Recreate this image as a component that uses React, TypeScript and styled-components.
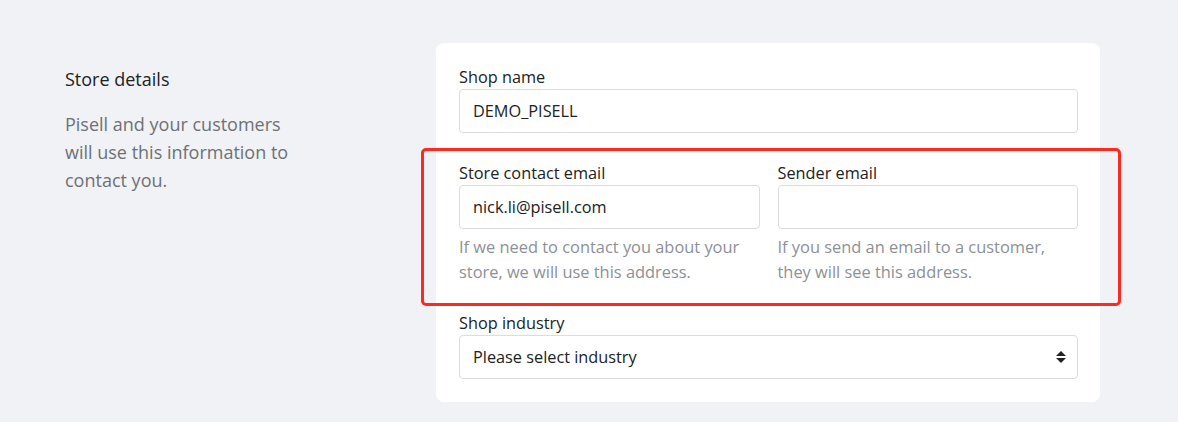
import styled, { createGlobalStyle } from 'styled-components'

const GlobalStyle = createGlobalStyle`
  html, body {
    margin: 0;
    padding: 0;
    background: #f1f2f6;
    font-family: "Open Sans", "Noto Sans", "Liberation Sans", sans-serif;
  }
  * {
    box-sizing: border-box;
  }
`

const Page = styled.div`
  display: flex;
  align-items: flex-start;
  padding: 43px 0 21px 65px;
  width: 1178px;
  height: 422px;
  background: #f1f2f6;
`

const Aside = styled.div`
  width: 371px;
  flex-shrink: 0;
  padding-top: 22px;
`

const AsideTitle = styled.h3`
  margin: 0;
  font-size: 18px;
  font-weight: 400;
  line-height: 28px;
  color: #202223;
`

const AsideText = styled.p`
  margin: 17px 0 0;
  width: 245px;
  font-size: 18px;
  line-height: 28px;
  color: #6d7175;
`

const Card = styled.div`
  position: relative;
  display: flex;
  flex-direction: column;
  gap: 28px;
  width: 664px;
  padding: 22px 22px 23px 23px;
  background: #ffffff;
  border-radius: 8px;
`

const Row = styled.div`
  position: relative;
  display: grid;
  grid-template-columns: 1fr 1fr;
  column-gap: 18px;
  margin-bottom: -1px;
`

const Highlight = styled.div`
  position: absolute;
  top: -13px;
  left: -38px;
  right: -43px;
  bottom: -22px;
  border: 3px solid #ff2a1f;
  border-radius: 5px;
  pointer-events: none;
`

const Field = styled.div`
  display: flex;
  flex-direction: column;
`

const Label = styled.label`
  font-size: 16.3px;
  line-height: 24px;
  color: #202223;
`

const InputBox = styled.div`
  position: relative;
  display: flex;
  align-items: center;
  height: 44px;
  padding: 0 13px;
  border: 1px solid #dcdcdc;
  border-radius: 4px;
  background: #fff;
  font-size: 16.3px;
  color: #202223;
`

const Help = styled.div`
  margin-top: 5px;
  font-size: 16.4px;
  line-height: 25px;
  color: #8c9196;
`

const Arrows = styled.svg`
  position: absolute;
  right: 10px;
  top: 50%;
  transform: translateY(-50%);
`

export default function App() {
  return (
    <>
      <GlobalStyle />
      <Page>
        <Aside>
          <AsideTitle>Store details</AsideTitle>
          <AsideText>Pisell and your customers will use this information to contact you.</AsideText>
        </Aside>
        <Card>
          <Field>
            <Label>Shop name</Label>
            <InputBox>DEMO_PISELL</InputBox>
          </Field>
          <Row>
            <Highlight />
            <Field>
              <Label>Store contact email</Label>
              <InputBox>nick.li@pisell.com</InputBox>
              <Help>If we need to contact you about your store, we will use this address.</Help>
            </Field>
            <Field>
              <Label>Sender email</Label>
              <InputBox />
              <Help>If you send an email to a customer, they will see this address.</Help>
            </Field>
          </Row>
          <Field>
            <Label>Shop industry</Label>
            <InputBox>
              Please select industry
              <Arrows width="12" height="14" viewBox="0 0 12 14">
                <path d="M6 1 L11 6 H1 Z" fill="#202223" />
                <path d="M1 8 H11 L6 13 Z" fill="#202223" />
              </Arrows>
            </InputBox>
          </Field>
        </Card>
      </Page>
    </>
  )
}
